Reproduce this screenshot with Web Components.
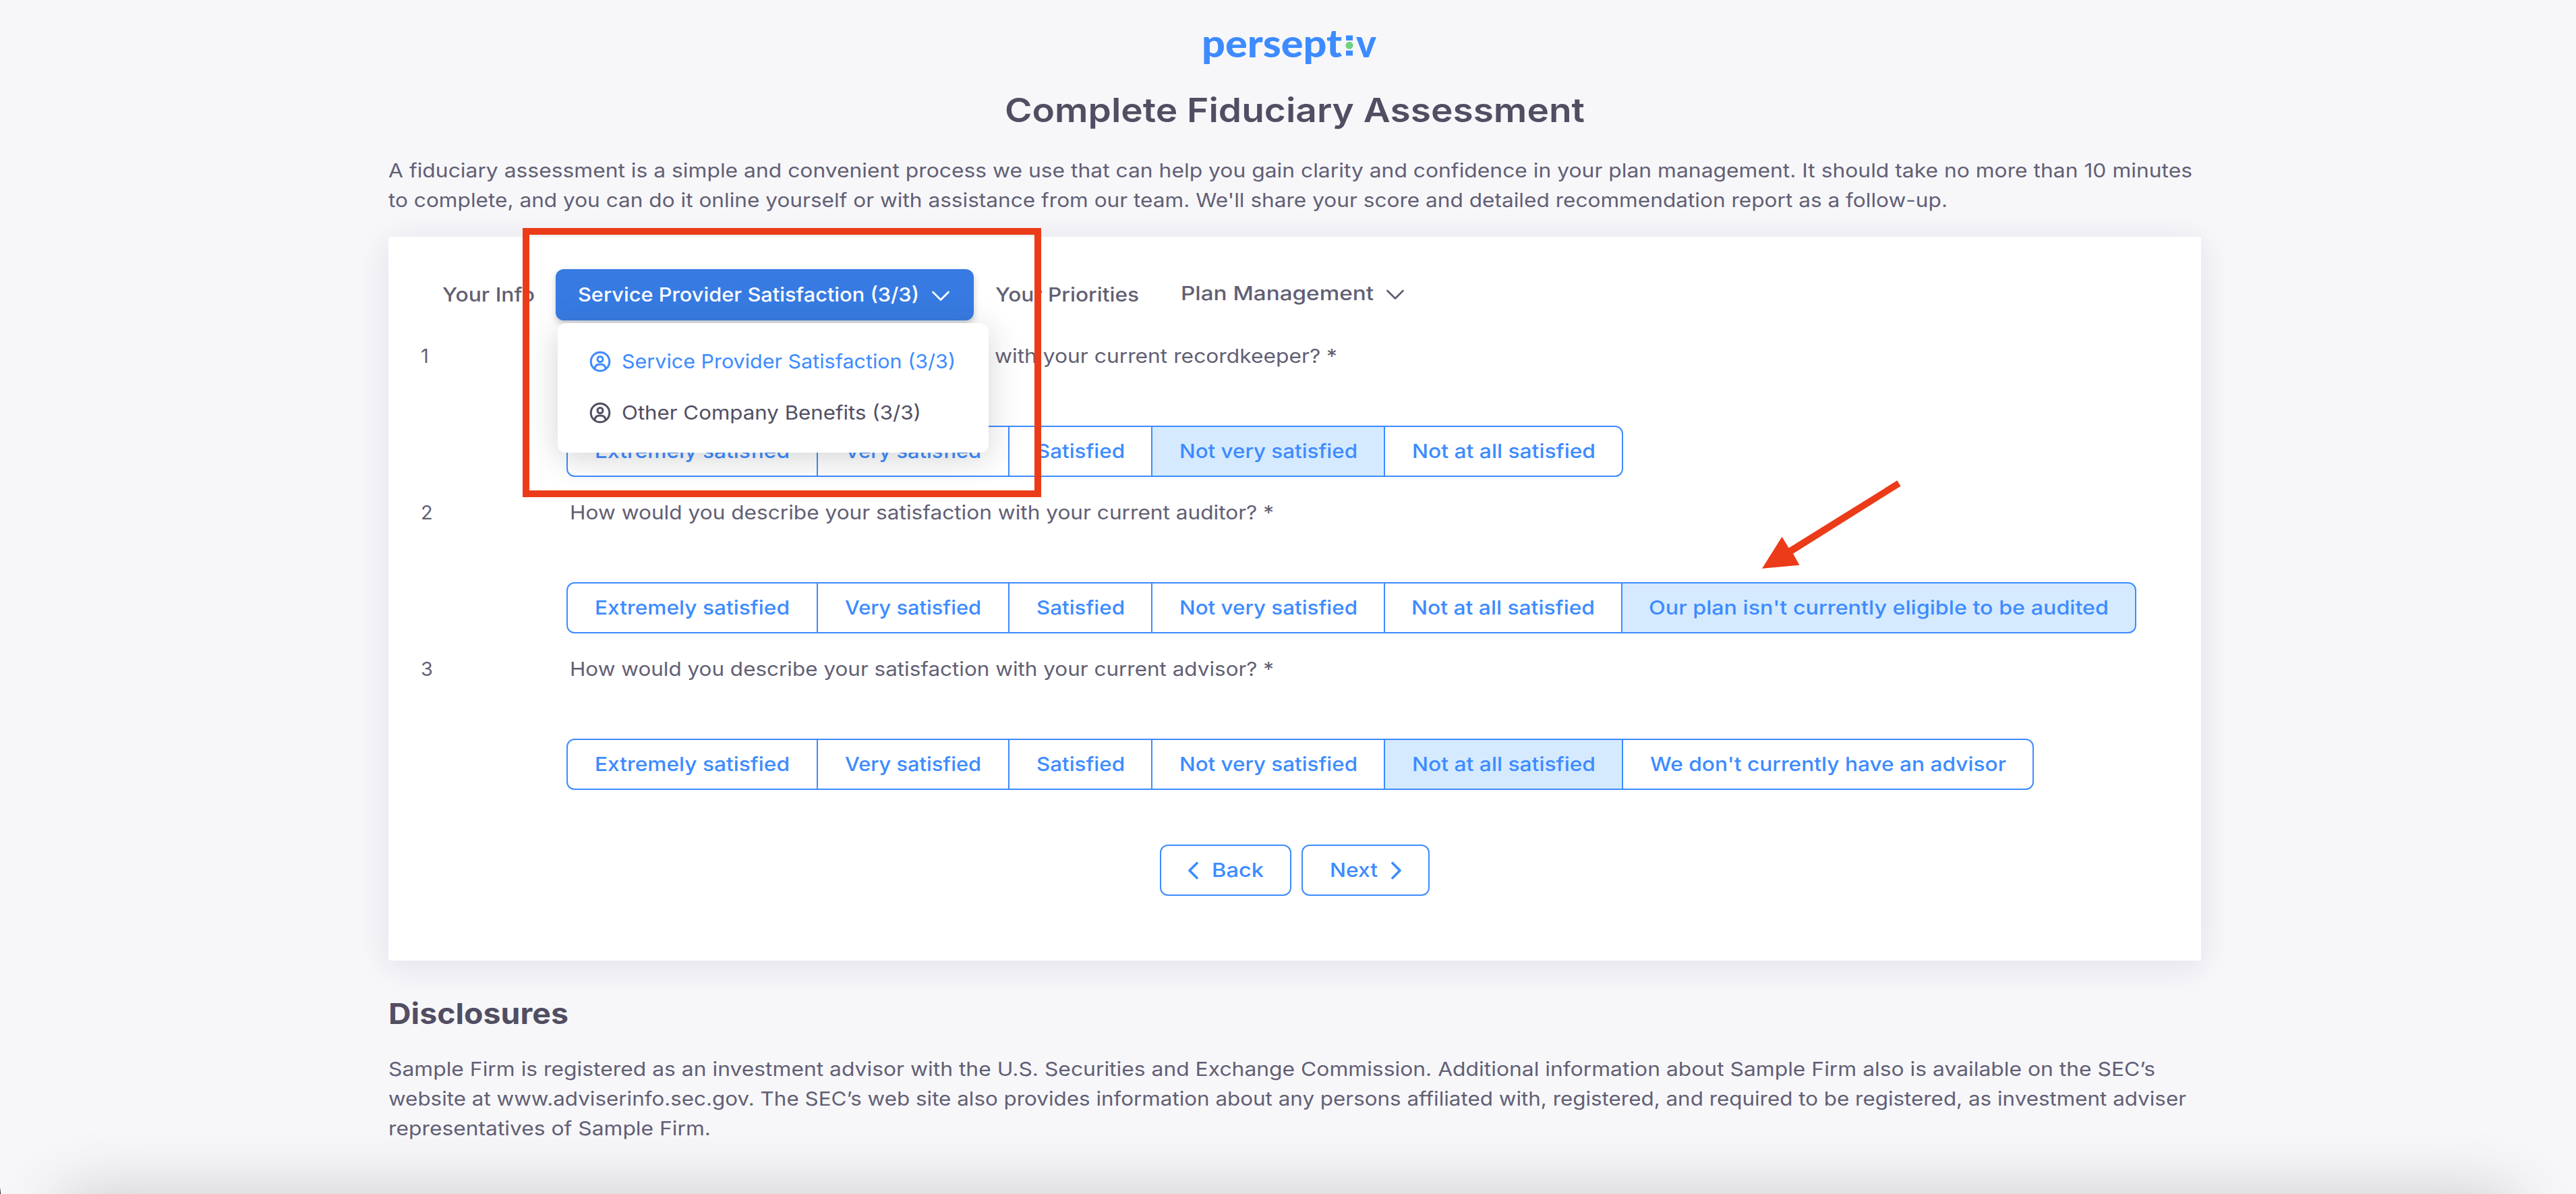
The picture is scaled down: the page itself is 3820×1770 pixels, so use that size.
<!DOCTYPE html>
<html lang="en">
<head>
<meta charset="utf-8">
<title>Complete Fiduciary Assessment</title>
<style>
    html, body {
        margin: 0;
        background: #f7f7fa;
    }
    body {
        font-family: Inter, "Open Sans", sans-serif;
        font-size: 29px;
        line-height: 44px;
        color: #625f74;
        --blue: #3d8bff;
        --heading: #514e62;
        --red: #eb3b18;
    }
    /* this part of the question lies under the open menu */
    .covered {
        visibility: hidden;
        margin-right: 9px;
    }
</style>
</head>
<body>
<assessment-page>
    <brand-logo slot="logo"></brand-logo>
    <fit-text slot="title" w="860">Complete Fiduciary Assessment</fit-text>
    <fit-text slot="intro" w="2675">A fiduciary assessment is a simple and convenient process we use that can help you gain clarity and confidence in your plan management. It should take no more than 10 minutes</fit-text>
    <fit-text slot="intro" w="2312">to complete, and you can do it online yourself or with assistance from our team. We'll share your score and detailed recommendation report as a follow-up.</fit-text>

    <survey-card>
        <nav-tab slot="nav" style="margin-left:80px"><fit-text w="137">Your Info</fit-text></nav-tab>
        <nav-tab slot="nav" active style="margin-left:31px">
            <fit-text w="506">Service Provider Satisfaction (3/3)</fit-text>
            <drop-menu slot="menu">
                <menu-item active><fit-text w="495">Service Provider Satisfaction (3/3)</fit-text></menu-item>
                <menu-item><fit-text w="444">Other Company Benefits (3/3)</fit-text></menu-item>
            </drop-menu>
        </nav-tab>
        <nav-tab slot="nav" style="margin-left:32px"><fit-text w="213">Your Priorities</fit-text></nav-tab>
        <nav-tab slot="nav" more style="margin-left:62px"><fit-text w="286">Plan Management</fit-text></nav-tab>

        <survey-question number="1">
            <fit-text slot="text" class="covered" w="621">How would you describe your satisfaction</fit-text><fit-text slot="text" w="508">with your current recordkeeper? *</fit-text>
            <answer-option w="373"><fit-text w="289">Extremely satisfied</fit-text></answer-option>
            <answer-option w="286"><fit-text w="202">Very satisfied</fit-text></answer-option>
            <answer-option w="214"><fit-text w="131">Satisfied</fit-text></answer-option>
            <answer-option w="347" selected><fit-text w="264">Not very satisfied</fit-text></answer-option>
            <answer-option w="355"><fit-text w="272">Not at all satisfied</fit-text></answer-option>
        </survey-question>
        <survey-question number="2">
            <fit-text slot="text" w="1044">How would you describe your satisfaction with your current auditor? *</fit-text>
            <answer-option w="373"><fit-text w="289">Extremely satisfied</fit-text></answer-option>
            <answer-option w="286"><fit-text w="202">Very satisfied</fit-text></answer-option>
            <answer-option w="214"><fit-text w="131">Satisfied</fit-text></answer-option>
            <answer-option w="347"><fit-text w="264">Not very satisfied</fit-text></answer-option>
            <answer-option w="354"><fit-text w="272">Not at all satisfied</fit-text></answer-option>
            <answer-option w="764" selected><fit-text w="682">Our plan isn't currently eligible to be audited</fit-text></answer-option>
        </survey-question>
        <survey-question number="3">
            <fit-text slot="text" w="1044">How would you describe your satisfaction with your current advisor? *</fit-text>
            <answer-option w="373"><fit-text w="289">Extremely satisfied</fit-text></answer-option>
            <answer-option w="286"><fit-text w="202">Very satisfied</fit-text></answer-option>
            <answer-option w="214"><fit-text w="131">Satisfied</fit-text></answer-option>
            <answer-option w="347"><fit-text w="264">Not very satisfied</fit-text></answer-option>
            <answer-option w="355" selected><fit-text w="272">Not at all satisfied</fit-text></answer-option>
            <answer-option w="611"><fit-text w="528">We don't currently have an advisor</fit-text></answer-option>
        </survey-question>

        <step-button slot="actions" dir-to="back"><fit-text w="77">Back</fit-text></step-button>
        <step-button slot="actions" dir-to="next"><fit-text w="71">Next</fit-text></step-button>
    </survey-card>

    <fit-text slot="disclosure-title" w="267">Disclosures</fit-text>
    <fit-text slot="disclosure" w="2620">Sample Firm is registered as an investment advisor with the U.S. Securities and Exchange Commission. Additional information about Sample Firm also is available on the SEC’s</fit-text>
    <fit-text slot="disclosure" w="2666">website at www.adviserinfo.sec.gov. The SEC’s web site also provides information about any persons affiliated with, registered, and required to be registered, as investment adviser</fit-text>
    <fit-text slot="disclosure" w="478">representatives of Sample Firm.</fit-text>

    <red-markup slot="markup"></red-markup>
</assessment-page>

<script>
class BaseElement extends HTMLElement {
    constructor() {
        super();
        this.attachShadow({ mode: 'open' });
    }

    connectedCallback() {
        this.shadowRoot.innerHTML = this.render();
    }
}

class AssessmentPage extends BaseElement {
    render() {
        return `
            <style>
                :host {
                    display: block;
                    position: relative;
                    box-sizing: border-box;
                    height: 1770px;
                    padding-left: 576px;
                    overflow: hidden;
                }
                main { width: 2688px; }
                header { display: flex; justify-content: center; height: 132px; padding-right: 17px; }
                h1 {
                    margin: 0;
                    text-align: center;
                    font-size: 50px;
                    line-height: 62px;
                    font-weight: 600;
                    color: var(--heading);
                }
                .intro { display: flex; flex-direction: column; margin: 37px 0 32px; }
                h2 {
                    margin: 52px 0 35px;
                    font-size: 43px;
                    line-height: 52px;
                    font-weight: 700;
                    color: var(--heading);
                }
                .disclosure { display: flex; flex-direction: column; }
                /* shade of the dock creeping in from below */
                .shade {
                    position: absolute;
                    left: 90px;
                    right: 90px;
                    top: 1772px;
                    height: 300px;
                    box-shadow: 0 0 100px rgba(0, 0, 0, .19);
                }
                .corner {
                    position: absolute;
                    left: 0;
                    bottom: 0;
                    width: 1px;
                    height: 10px;
                    background: linear-gradient(transparent, #000);
                }
            </style>
            <main>
                <header><slot name="logo"></slot></header>
                <h1><slot name="title"></slot></h1>
                <div class="intro"><slot name="intro"></slot></div>
                <slot></slot>
                <h2><slot name="disclosure-title"></slot></h2>
                <div class="disclosure"><slot name="disclosure"></slot></div>
            </main>
            <div class="shade"></div>
            <div class="corner"></div>
            <slot name="markup"></slot>
        `;
    }
}

class BrandLogo extends BaseElement {
    render() {
        return `
            <style>
                :host {
                    display: flex;
                    align-items: flex-start;
                    padding-top: 27px;
                    height: 72px;
                    font: 900 57px/72px Lato, sans-serif;
                    color: var(--blue);
                }
                svg { margin: 25px 4px 0 5px; }
            </style>
            <fit-text w="208">persept</fit-text>
            <svg width="12" height="32" viewBox="0 0 12 32">
                <rect x="1" y="0.5" width="10" height="7.5" fill="#3d8bff"/>
                <circle cx="6" cy="15.3" r="5.5" fill="#6dd381"/>
                <rect x="1" y="23" width="10" height="7.5" fill="#3d8bff"/>
            </svg>
            <fit-text w="30">v</fit-text>
        `;
    }
}

class SurveyCard extends BaseElement {
    render() {
        return `
            <style>
                :host {
                    display: block;
                    box-sizing: border-box;
                    height: 1073px;
                    padding-top: 48px;
                    background: #fff;
                    border-radius: 4px;
                    box-shadow: 0 8px 48px rgba(40, 36, 75, .11);
                }
                nav { display: flex; height: 76px; margin-bottom: 31px; }
                .questions { display: flex; flex-direction: column; gap: 31px; }
                .actions { display: flex; justify-content: center; gap: 15px; margin-top: 81px; }
            </style>
            <nav><slot name="nav"></slot></nav>
            <div class="questions"><slot></slot></div>
            <div class="actions"><slot name="actions"></slot></div>
        `;
    }
}

class NavTab extends BaseElement {
    render() {
        const chevron = this.hasAttribute('active') || this.hasAttribute('more');
        return `
            <style>
                :host {
                    display: flex;
                    position: relative;
                    align-items: center;
                    box-sizing: border-box;
                    height: 76px;
                    font-weight: 450;
                }
                :host([more]) { padding-bottom: 4px; }
                :host([active]) {
                    width: 620px;
                    padding-left: 33px;
                    border-radius: 12px;
                    background: #377be2;
                    color: #fff;
                    box-shadow: 0 4px 10px rgba(60, 60, 80, .28);
                }
                svg { margin-left: 18px; margin-top: 4px; }
            </style>
            <slot></slot>
            ${chevron ? `<svg width="28" height="16" viewBox="0 0 28 16" fill="none" stroke="currentColor" stroke-width="2.8" stroke-linecap="round" stroke-linejoin="round"><path d="M2.5 2 14 13.5 25.5 2"/></svg>` : ''}
            <slot name="menu"></slot>
        `;
    }
}

class DropMenu extends BaseElement {
    render() {
        return `
            <style>
                :host {
                    position: absolute;
                    z-index: 2;
                    left: 3px;
                    top: 80px;
                    box-sizing: border-box;
                    width: 639px;
                    height: 192px;
                    padding: 19px 0;
                    border-radius: 12px;
                    background: #fff;
                    box-shadow: 0 8px 48px rgba(34, 41, 47, .2);
                    font-weight: 400;
                    color: var(--heading);
                }
            </style>
            <slot></slot>
        `;
    }
}

class MenuItem extends BaseElement {
    render() {
        return `
            <style>
                :host { display: flex; align-items: center; height: 76px; padding-left: 47px; }
                :host([active]) { color: var(--blue); }
                svg { margin-right: 16px; }
            </style>
            <svg width="32" height="32" viewBox="0 0 32 32" fill="none" stroke="currentColor" stroke-width="3">
                <circle cx="16" cy="16" r="13.8"/>
                <circle cx="16" cy="12.5" r="4"/>
                <path d="M8 26.5c.3-4.600 3-6.500 8-6.500s7.700 1.900 8 6.500"/>
            </svg>
            <slot></slot>
        `;
    }
}

class SurveyQuestion extends BaseElement {
    render() {
        return `
            <style>
                :host { display: grid; grid-template-columns: 216px 1fr; padding-left: 48px; }
                .text { display: flex; height: 44px; margin: 0 0 81px 5px; }
                .options { display: flex; }
            </style>
            <div>${this.getAttribute('number')}</div>
            <div>
                <div class="text"><slot name="text"></slot></div>
                <div class="options"><slot></slot></div>
            </div>
        `;
    }
}

class AnswerOption extends BaseElement {
    render() {
        return `
            <style>
                :host {
                    display: flex;
                    align-items: center;
                    justify-content: center;
                    box-sizing: border-box;
                    width: ${this.getAttribute('w')}px;
                    height: 76px;
                    border: 2px solid var(--blue);
                    color: var(--blue);
                    font-weight: 450;
                }
                :host(:not(:first-of-type)) { margin-left: -2px; }
                :host(:first-of-type) { border-radius: 12px 0 0 12px; }
                :host(:last-of-type) { border-radius: 0 12px 12px 0; }
                :host([selected]) { background: #d5eaff; }
            </style>
            <slot></slot>
        `;
    }
}

class StepButton extends BaseElement {
    render() {
        const back = this.getAttribute('dir-to') === 'back';
        const points = back ? '14,2.500 3,13.500 14,24.500' : '3,2.500 14,13.500 3,24.500';
        const icon = `<svg width="17" height="27" viewBox="0 0 17 27" fill="none" stroke="currentColor" stroke-width="3.600" stroke-linecap="round" stroke-linejoin="round"><polyline points="${points}"/></svg>`;
        return `
            <style>
                :host {
                    display: flex;
                    align-items: center;
                    justify-content: center;
                    gap: 19px;
                    box-sizing: border-box;
                    width: ${back ? 195 : 190}px;
                    height: 76px;
                    border: 2px solid var(--blue);
                    border-radius: 12px;
                    color: var(--blue);
                    font-weight: 450;
                }
            </style>
            ${back ? icon : ''}<slot></slot>${back ? '' : icon}
        `;
    }
}

// hand drawn frame and arrow lying over the page
class RedMarkup extends BaseElement {
    render() {
        return `
            <style>
                :host { position: absolute; inset: 0; z-index: 5; pointer-events: none; color: var(--red); }
                svg { display: block; }
            </style>
            <svg width="3820" height="1770" viewBox="0 0 3820 1770">
                <rect x="780" y="343" width="759" height="389" fill="none" stroke="currentColor" stroke-width="10"/>
                <path fill="currentColor" d="M2813.400 712.300 2818.500 720.700 2659 820.700 2668.500 837.700 2613 842.700 2642.500 795.700 2652.700 812.300Z"/>
            </svg>
        `;
    }
}

// one line of text, widened so that it is w pixels wide
class FitText extends BaseElement {
    connectedCallback() {
        super.connectedCallback();
        const line = this.shadowRoot.querySelector('span');
        const width = this.getAttribute('w');
        const natural = line.getBoundingClientRect().width;
        line.style.transform = `scaleX(${width / natural})`;
        this.style.width = width + 'px';
    }

    render() {
        return `
            <style>
                :host { display: inline-block; flex: none; text-align: left; white-space: nowrap; }
                span { display: inline-block; transform-origin: 0 0; }
            </style>
            <span><slot></slot></span>
        `;
    }
}

customElements.define('assessment-page', AssessmentPage);
customElements.define('brand-logo', BrandLogo);
customElements.define('survey-card', SurveyCard);
customElements.define('nav-tab', NavTab);
customElements.define('drop-menu', DropMenu);
customElements.define('menu-item', MenuItem);
customElements.define('survey-question', SurveyQuestion);
customElements.define('answer-option', AnswerOption);
customElements.define('step-button', StepButton);
customElements.define('red-markup', RedMarkup);
customElements.define('fit-text', FitText);
</script>
</body>
</html>
